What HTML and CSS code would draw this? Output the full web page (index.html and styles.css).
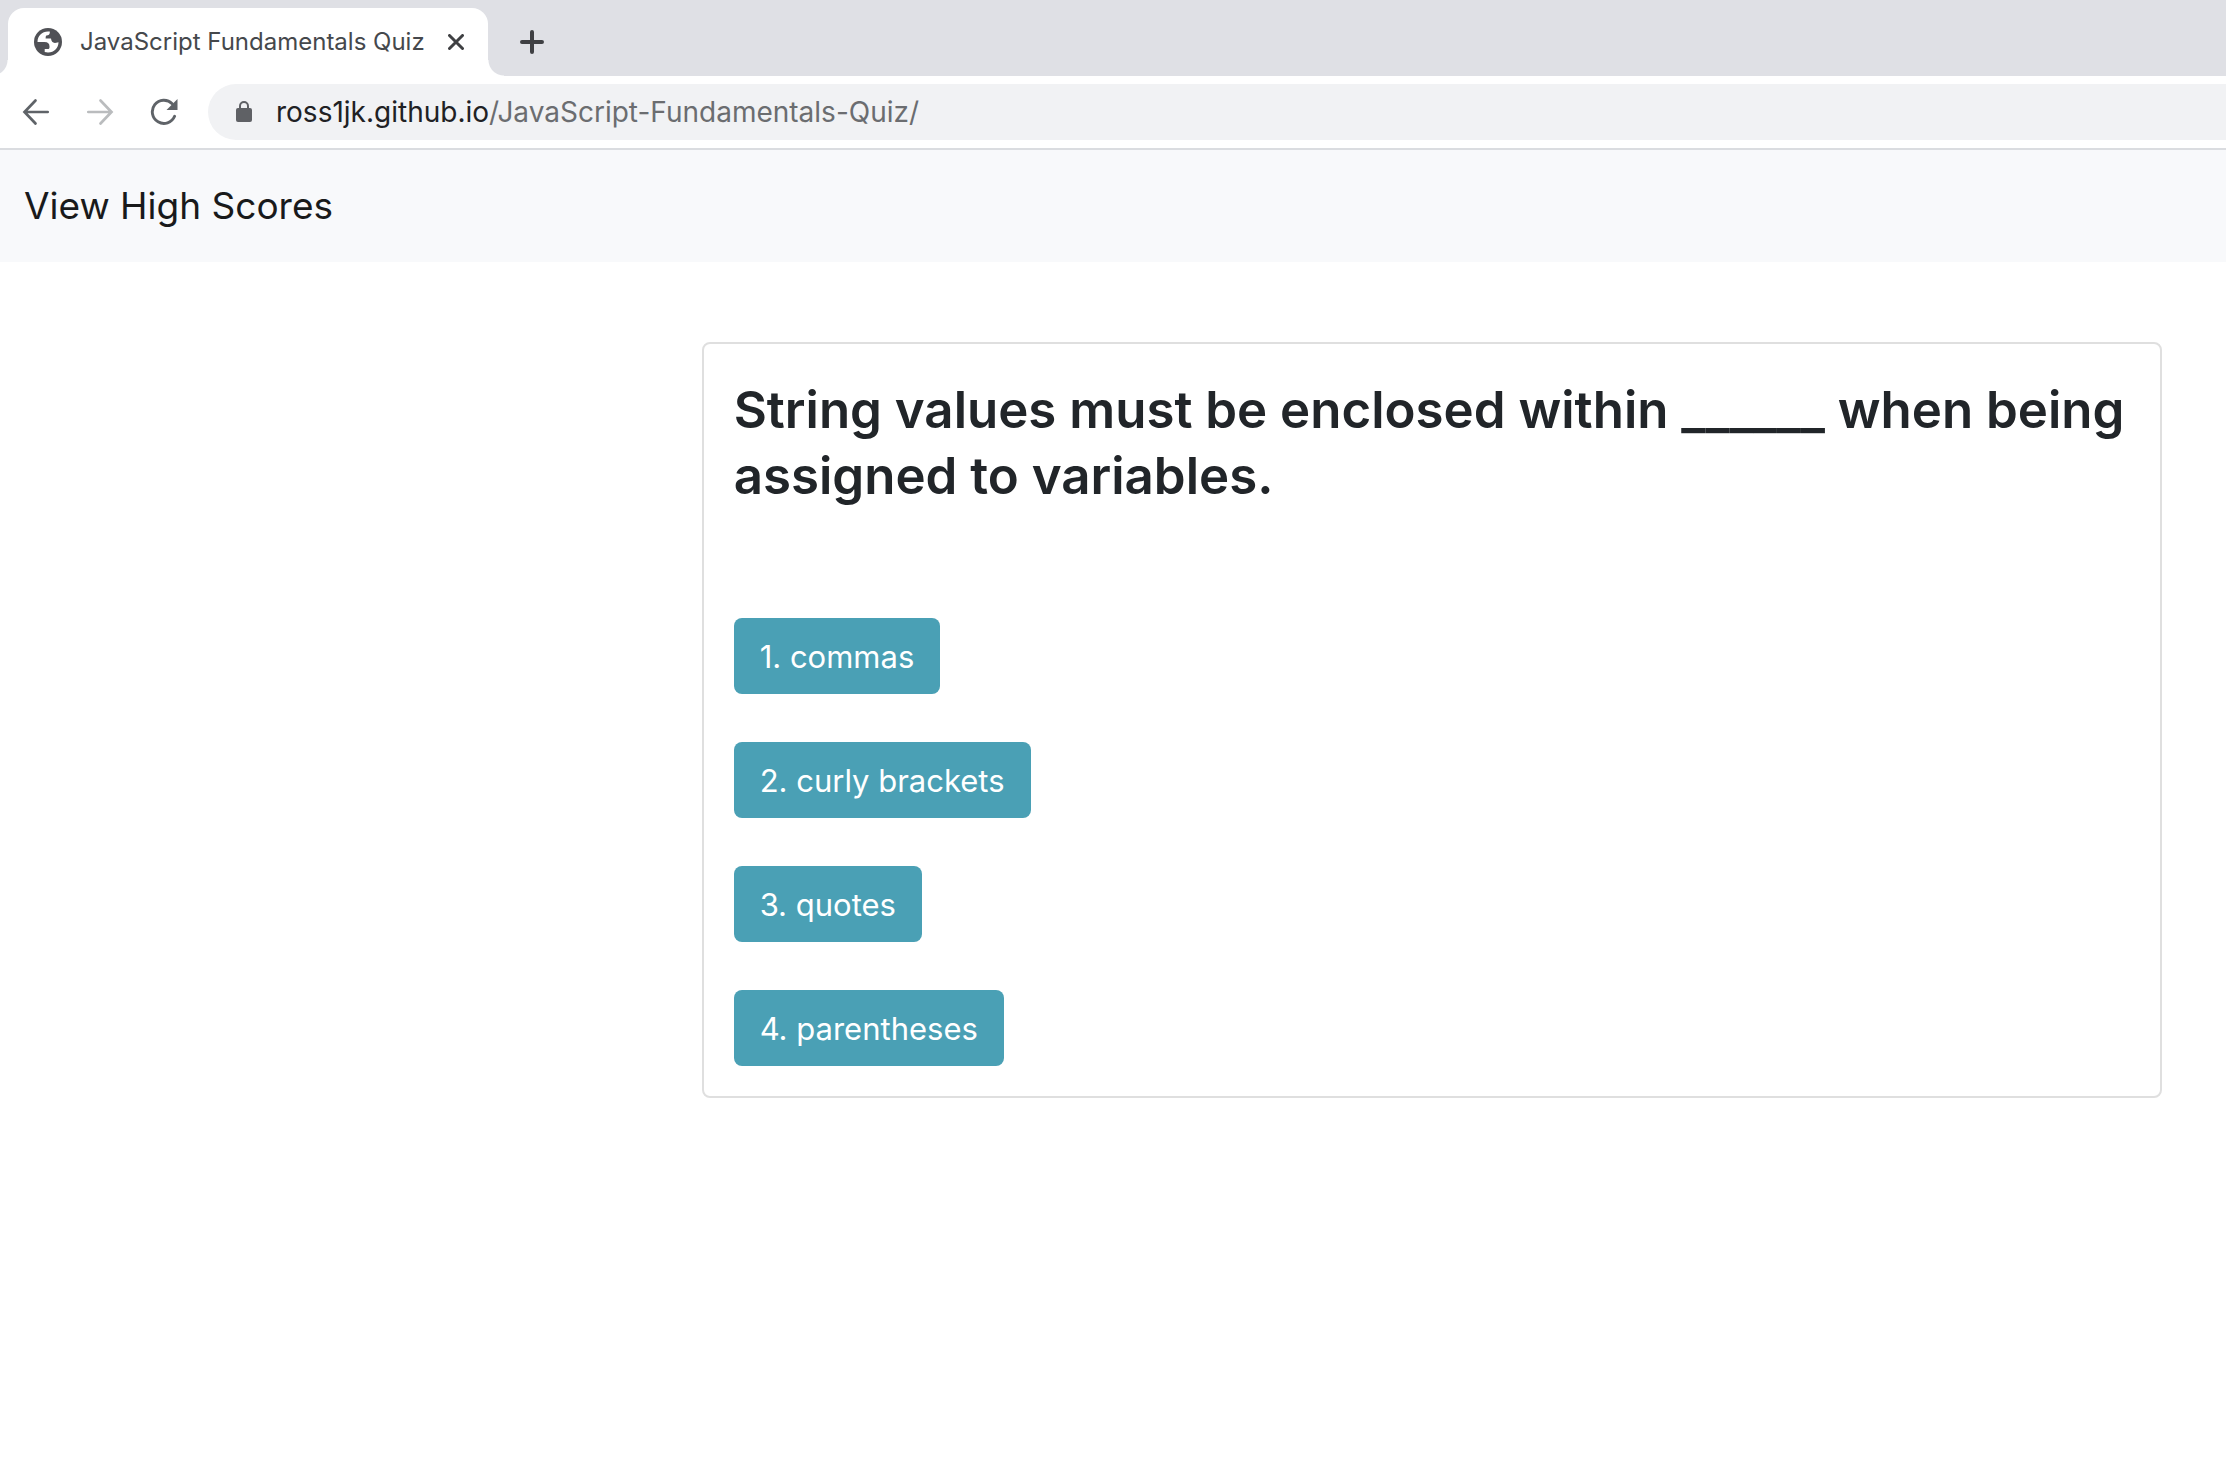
FILE: index.html
```html
<!DOCTYPE html>
<html lang="en">
<head>
<meta charset="utf-8">
<meta name="viewport" content="width=device-width, initial-scale=1">
<title>JavaScript Fundamentals Quiz</title>
<link rel="stylesheet" href="styles.css">
</head>
<body>
<header class="browser">
  <div class="tab-strip">
    <div class="tab">
      <svg class="favicon" viewBox="0 0 28 28" aria-hidden="true">
        <circle cx="14" cy="14" r="14" fill="#505156"/>
        <path d="M3.5 14C3.500 8 8 3.500 14 3.500H15.800V4.500C15.800 6.500 14.500 7.200 12.500 7.500C11.800 7.700 11.800 8.500 11.600 10.500H17C17.200 13.300 18.800 15 21 14.900L24.500 14.300C24.500 20 20 24.600 14 24.500L10.700 23.900V20.900H14.500C15.200 20.900 15.500 20.300 15.500 18.500C15.500 15.500 14 14 10.500 14Z" fill="#fff"/>
      </svg>
      <span class="tab-title">JavaScript Fundamentals Quiz</span>
      <button class="icon-button" type="button" aria-label="Close tab">
        <svg class="close-icon" viewBox="0 0 16 16"><path d="M1.500 1.500L14.500 14.500M14.500 1.500L1.500 14.500" stroke="#3f4043" stroke-width="3" stroke-linecap="round"/></svg>
      </button>
    </div>
    <button class="icon-button new-tab" type="button" aria-label="New tab">
      <svg class="plus-icon" viewBox="0 0 24 24"><path d="M2 12H22M12 2V22" stroke="#3f4043" stroke-width="4" stroke-linecap="round"/></svg>
    </button>
  </div>
  <div class="toolbar">
    <div class="nav-buttons">
      <button class="icon-button" type="button" aria-label="Back">
        <svg class="nav-icon" viewBox="0 0 28 28"><path d="M25.700 14H3M13.500 2.500L2.500 14L13.500 25.500" fill="none" stroke="#5f6368" stroke-width="2.700" stroke-linecap="round"/></svg>
      </button>
      <button class="icon-button" type="button" aria-label="Forward" disabled>
        <svg class="nav-icon" viewBox="0 0 28 28"><path d="M2.300 14H25M14.500 2.500L25.500 14L14.500 25.500" fill="none" stroke="#babcbe" stroke-width="2.700" stroke-linecap="round"/></svg>
      </button>
      <button class="icon-button" type="button" aria-label="Reload">
        <svg class="nav-icon" viewBox="0 0 28 28"><path d="M24.600 18.300A11.600 11.600 0 1 1 22.200 5.700" fill="none" stroke="#5f6368" stroke-width="2.900" stroke-linecap="round"/><path d="M27.500 1V12H16.500Z" fill="#5f6368"/></svg>
      </button>
    </div>
    <div class="address">
      <svg class="lock-icon" viewBox="0 0 16 22" aria-hidden="true"><rect y="7" width="16" height="14" rx="2" fill="#5f6165"/><path d="M4 8V5A4 4 0 0 1 12 5V8" fill="none" stroke="#5f6165" stroke-width="2"/></svg>
      <span class="url"><span class="host">ross1jk.github.io</span>/JavaScript-Fundamentals-Quiz/</span>
    </div>
  </div>
</header>
<nav class="navbar"><a class="navbar-link" href="#scores">View High Scores</a></nav>
<main class="quiz">
  <section class="card">
    <h1 class="question">String values must be enclosed within ______ when being assigned to variables.</h1>
    <div class="answers">
      <button class="answer" type="button">1. commas</button>
      <button class="answer" type="button">2. curly brackets</button>
      <button class="answer" type="button">3. quotes</button>
      <button class="answer" type="button">4. parentheses</button>
    </div>
  </section>
</main>
</body>
</html>
```
FILE: styles.css
```css
* { box-sizing: border-box; }

body {
  margin: 0;
  background: #fff;
  color: #212529;
  font-family: Inter, "Liberation Sans", sans-serif;
}

svg { display: block; }

.icon-button {
  display: flex;
  align-items: center;
  padding: 0;
  border: 0;
  background: none;
}

.tab-strip {
  display: flex;
  height: 76px;
  padding: 8px 8px 0;
  background: #dfe0e5;
}

.tab {
  position: relative;
  display: flex;
  align-items: center;
  width: 480px;
  padding: 0 24px 0 26px;
  border-radius: 16px 16px 0 0;
  background: #fff;
}

/* Concave feet of the active tab */
.tab::before,
.tab::after {
  content: "";
  position: absolute;
  bottom: 0;
  width: 16px;
  height: 16px;
}

.tab::before {
  right: 100%;
  background: radial-gradient(circle at 0 0, transparent 15px, #fff 16px);
}

.tab::after {
  left: 100%;
  background: radial-gradient(circle at 100% 0, transparent 15px, #fff 16px);
}

.favicon { width: 28px; height: 28px; margin-right: 18px; }

.tab-title {
  flex: 1;
  color: #45484c;
  font-size: 24px;
  line-height: 32px;
  white-space: nowrap;
}

.close-icon { width: 16px; height: 16px; }
.new-tab { margin-left: 32px; }
.plus-icon { width: 24px; height: 24px; }

.toolbar {
  display: flex;
  align-items: center;
  gap: 30px;
  padding: 8px 0 8px 22px;
  border-bottom: 2px solid #dadce0;
}

.nav-buttons { display: flex; gap: 36px; }
.nav-icon { width: 28px; height: 28px; }

.address {
  display: flex;
  flex: 1;
  align-items: center;
  gap: 24px;
  height: 56px;
  padding-left: 28px;
  border-radius: 28px 0 0 28px;
  background: #f1f2f4;
}

.lock-icon { width: 16px; height: 22px; }

.url {
  color: #6b6d70;
  font-size: 28px;
  line-height: 40px;
  white-space: nowrap;
}

.host { color: #202124; }

.navbar {
  padding: 26px 24px;
  background: #f8f9fb;
}

.navbar-link {
  display: inline-block;
  color: #191a1b;
  font-size: 37px;
  line-height: 60px;
  text-decoration: none;
}

.quiz {
  display: grid;
  grid-template-columns: 31fr 71fr;
  padding: 80px 64px;
}

.card {
  grid-column: 2;
  padding: 33px 30px 30px;
  border: 2px solid #dfdfdf;
  border-radius: 8px;
}

.question {
  margin: 0 0 109px;
  font-size: 51px;
  font-weight: 600;
  line-height: 66px;
}

.answers {
  display: flex;
  flex-direction: column;
  align-items: flex-start;
  gap: 48px;
}

.answer {
  height: 76px;
  padding: 0 26px;
  border: 0;
  border-radius: 8px;
  background: #4aa0b5;
  color: #fff;
  font-family: inherit;
  font-size: 31px;
}
```
